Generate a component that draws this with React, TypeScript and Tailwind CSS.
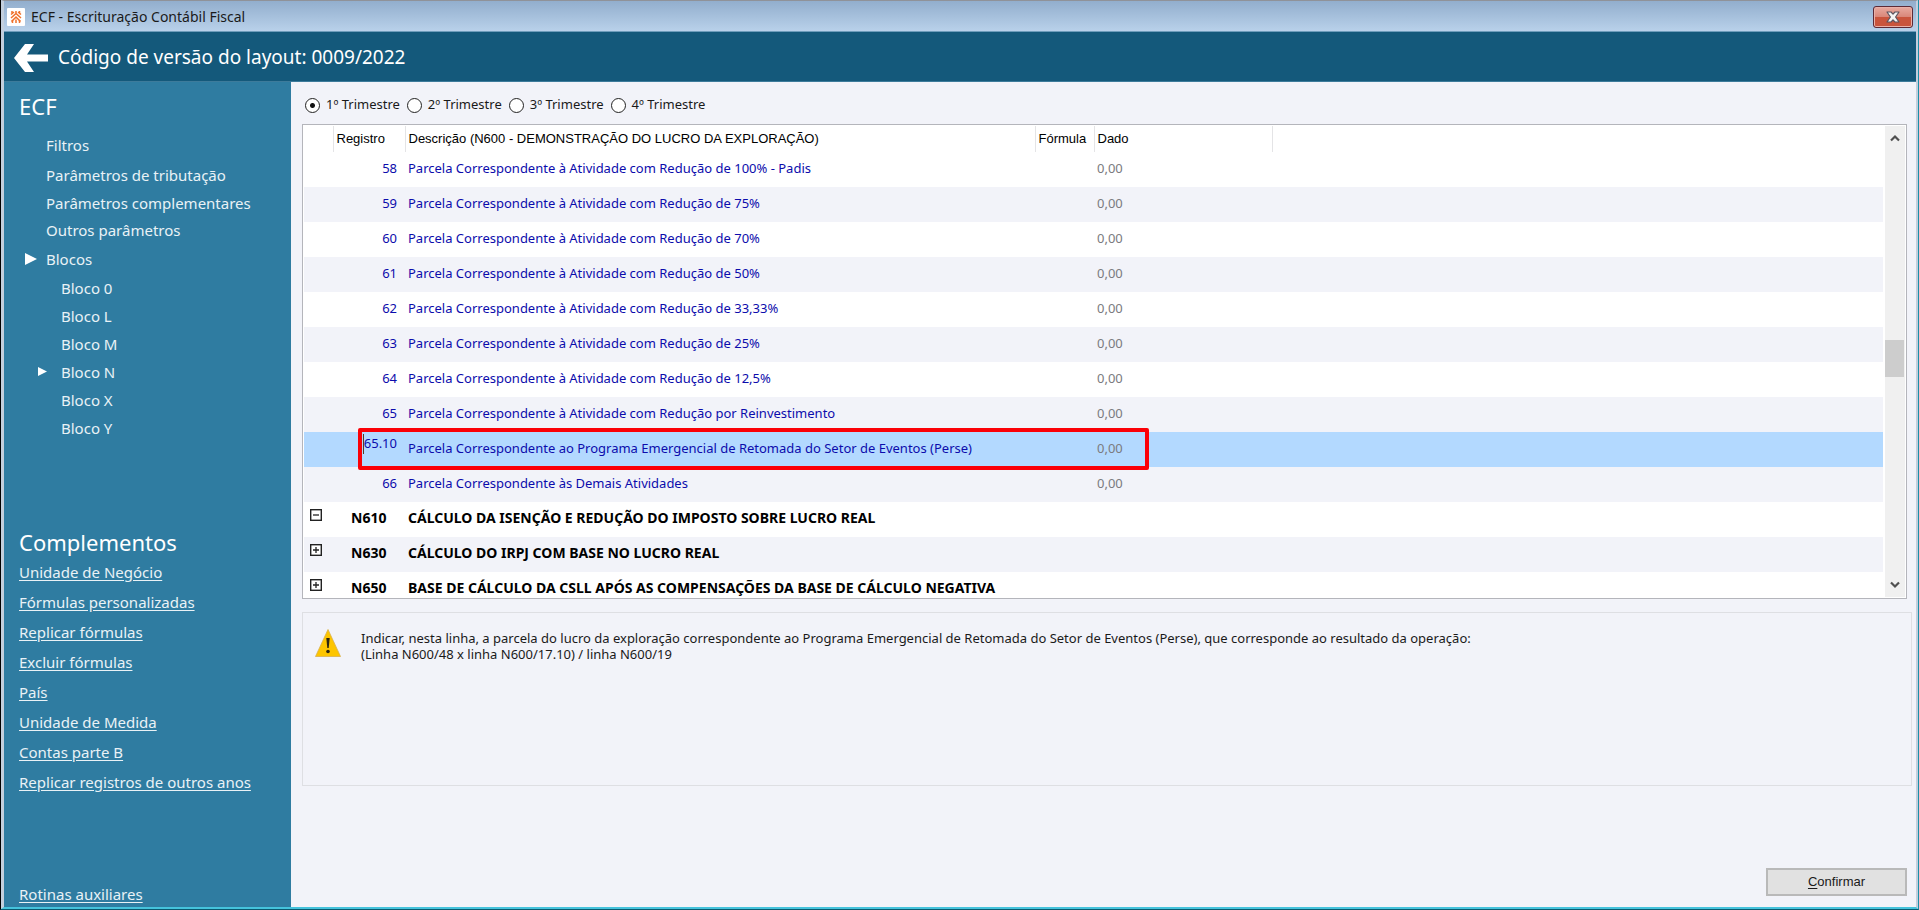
import React, { useState } from "react";

type Line = { code: string; text: string; value?: string; state?: "open" | "closed" };

const prefix = "Parcela Correspondente à Atividade com Redução";

const lines: Line[] = [
  { code: "58", text: `${prefix} de 100% - Padis`, value: "0,00" },
  { code: "59", text: `${prefix} de 75%`, value: "0,00" },
  { code: "60", text: `${prefix} de 70%`, value: "0,00" },
  { code: "61", text: `${prefix} de 50%`, value: "0,00" },
  { code: "62", text: `${prefix} de 33,33%`, value: "0,00" },
  { code: "63", text: `${prefix} de 25%`, value: "0,00" },
  { code: "64", text: `${prefix} de 12,5%`, value: "0,00" },
  { code: "65", text: `${prefix} por Reinvestimento`, value: "0,00" },
  {
    code: "65.10",
    text: "Parcela Correspondente ao Programa Emergencial de Retomada do Setor de Eventos (Perse)",
    value: "0,00",
  },
  { code: "66", text: "Parcela Correspondente às Demais Atividades", value: "0,00" },
  { code: "N610", text: "CÁLCULO DA ISENÇÃO E REDUÇÃO DO IMPOSTO SOBRE LUCRO REAL", state: "open" },
  { code: "N630", text: "CÁLCULO DO IRPJ COM BASE NO LUCRO REAL", state: "closed" },
  {
    code: "N650",
    text: "BASE DE CÁLCULO DA CSLL APÓS AS COMPENSAÇÕES DA BASE DE CÁLCULO NEGATIVA",
    state: "closed",
  },
];

const selected = "65.10";
const blocks = ["Bloco 0", "Bloco L", "Bloco M", "Bloco N", "Bloco X", "Bloco Y"];
const links = [
  "Unidade de Negócio",
  "Fórmulas personalizadas",
  "Replicar fórmulas",
  "Excluir fórmulas",
  "País",
  "Unidade de Medida",
  "Contas parte B",
  "Replicar registros de outros anos",
];

function AppIcon() {
  return (
    <svg viewBox="0 0 18 18" className="size-[18px]" aria-hidden="true">
      <rect width="18" height="18" rx="1" fill="#fff" />
      <g fill="none" stroke="#f0702a" strokeWidth="1.5">
        <path d="M4 6.500 7 4M11 4l3 2.500M4 10l5-4.500 5 4.500M4.500 13.500l4.500-4.500 4.500 4.500" />
        <path d="M5.500 15v-3M9 15v-3.500M12.500 15v-3M12.500 3v2M5 3v2M9 3v2" />
      </g>
    </svg>
  );
}

function CloseIcon() {
  return (
    <svg viewBox="0 0 14 12" className="h-3 w-3.5" aria-hidden="true">
      <path
        d="M1 1h4l2 2.200L9 1h4L9.600 6 13 11H9L7 8.800 5 11H1L4.400 6Z"
        fill="#f4f4f4"
        stroke="#5b5560"
        strokeWidth="1.200"
        strokeLinejoin="round"
      />
    </svg>
  );
}

function Expander({ open }: { open: boolean }) {
  return (
    <svg viewBox="0 0 12 12" className="block size-3" aria-hidden="true">
      <rect x="0.700" y="0.700" width="10.600" height="10.600" fill="#fff" stroke="#222" strokeWidth="1.400" />
      <path d={open ? "M3 6h6" : "M3 6h6M6 3v6"} stroke="#222" strokeWidth="1.300" />
    </svg>
  );
}

function Chevron({ up }: { up?: boolean }) {
  return (
    <svg viewBox="0 0 10 8" className="h-2 w-2.5" aria-hidden="true">
      <path d={up ? "M1 6.500 5 2.500l4 4" : "M1 1.500l4 4 4-4"} fill="none" stroke="#505050" strokeWidth="2.200" />
    </svg>
  );
}

export default function App() {
  const [quarter, setQuarter] = useState(1);

  return (
    <div className="flex h-screen flex-col overflow-hidden border-r border-b border-l border-r-[#1b8fa8] border-b-[#0b5a70] border-l-black bg-[#c3cfdd] font-['Noto_Sans','Open_Sans',sans-serif] text-[#1a1a1a]">
      <div className="flex min-h-0 flex-1 flex-col border-t border-r-2 border-b-2 border-l-[3px] border-x-[#c3cfdd] border-t-[#8f9299] border-b-[#45c3dc]">
        <div className="flex h-[31px] shrink-0 items-center border-b border-[#6e9dbb] bg-linear-to-b from-[#92aecd] to-[#b9d1ea] pt-0.5 pr-[3px] pl-[3px]">
          <AppIcon />
          <h1 className="ml-1.5 text-sm">ECF - Escrituração Contábil Fiscal</h1>
          <button
            type="button"
            aria-label="Fechar"
            className="ml-auto flex h-[22px] w-10 items-center justify-center rounded-[3px] border border-[#5c2a36] bg-linear-to-b from-[#e8aaa0] from-0% via-[#d98678] via-50% to-[#c9543c] to-50% shadow-[inset_0_0_0_1px_#e9b0a8]"
          >
            <CloseIcon />
          </button>
        </div>

        <header className="flex h-[50px] shrink-0 items-center border-b border-[#3d7b9b] bg-[#14597b] pt-0.5 pl-2.5 text-white">
          <button type="button" aria-label="Voltar">
            <svg viewBox="0 0 34 28" className="block h-7 w-[34px]" aria-hidden="true">
              <path d="M0 14 11 0h9l-7 10.500h21v7H13L20 28h-9Z" fill="#fff" />
            </svg>
          </button>
          <h2 className="ml-2.5 text-[19px]">Código de versão do layout: 0009/2022</h2>
        </header>

        <div className="flex min-h-0 flex-1">
          <nav className="flex w-[287px] shrink-0 flex-col bg-[#2f7ca1] text-[15px] text-[#e9f2f6]">
            <h3 className="flex h-12 shrink-0 items-center pl-[15px] text-[22px] text-white">ECF</h3>
            <ul className="pl-[42px]">
              <li className="flex h-[30px] items-center"><button type="button">Filtros</button></li>
              <li className="flex h-[30px] items-center"><button type="button">Parâmetros de tributação</button></li>
              <li className="flex h-[27px] items-center"><button type="button">Parâmetros complementares</button></li>
              <li className="flex h-[27px] items-center"><button type="button">Outros parâmetros</button></li>
              <li className="-ml-[21px]">
                <div className="flex h-[30px] items-center gap-[9px]">
                  <svg viewBox="0 0 12 12" className="size-3" aria-hidden="true">
                    <path d="M0 0 12 6 0 12Z" fill="#fff" />
                  </svg>
                  <button type="button">Blocos</button>
                </div>
                <ul className="pl-[13px]">
                  {blocks.map((b) => (
                    <li key={b} className="flex h-7 items-center">
                      <span className="w-[23px]">
                        {b === "Bloco N" && (
                          <svg viewBox="0 0 9 9" className="mb-0.5 size-[9px]" aria-hidden="true">
                            <path d="M0 0 9 4.500 0 9Z" fill="#fff" />
                          </svg>
                        )}
                      </span>
                      <button type="button">{b}</button>
                    </li>
                  ))}
                </ul>
              </li>
            </ul>
            <h3 className="mt-[85px] flex h-[30px] items-center pl-[15px] text-[22px] text-white">Complementos</h3>
            <ul className="pl-[15px]">
              {links.map((l) => (
                <li key={l} className="flex h-[30px] items-center">
                  <a href="#" className="underline underline-offset-2">{l}</a>
                </li>
              ))}
            </ul>
            <div className="mt-auto flex h-[26px] items-center pl-[15px]">
              <a href="#" className="underline underline-offset-2">Rotinas auxiliares</a>
            </div>
          </nav>

          <main className="flex min-w-0 flex-1 flex-col bg-[#f2f3f9] pr-1 pl-[11px] text-[13px]">
            <fieldset className="shrink-0">
              <div className="flex h-[42px] items-center gap-[7px] pt-1 pl-[3px]">
                {[1, 2, 3, 4].map((q) => (
                  <label key={q} className="flex items-center gap-1.5">
                    <input
                      type="radio"
                      name="trimestre"
                      checked={quarter === q}
                      onChange={() => setQuarter(q)}
                      className="size-[15px] appearance-none rounded-full border border-[#222] bg-white checked:bg-[radial-gradient(circle,#111_0_2px,#fff_3px)]"
                    />
                    {q}º Trimestre
                  </label>
                ))}
              </div>
            </fieldset>

            <section className="mr-[5px] flex min-h-0 flex-1 gap-0.5 border border-[#b4b5bb] bg-white p-px">
              <div className="min-w-0 flex-1 overflow-hidden">
                <table className="w-full table-fixed border-collapse text-left">
                  <colgroup>
                    <col className="w-[29px]" />
                    <col className="w-[72px]" />
                    <col className="w-[630px]" />
                    <col className="w-[59px]" />
                    <col className="w-[178px]" />
                    <col />
                  </colgroup>
                  <thead>
                    <tr className="h-[26px] font-['Liberation_Sans',Arial,sans-serif] text-black [&>th]:border-r [&>th]:border-[#e4e4e6] [&>th]:p-0 [&>th]:pl-[3px] [&>th]:font-normal">
                      <th></th>
                      <th scope="col">Registro</th>
                      <th scope="col">Descrição (N600 - DEMONSTRAÇÃO DO LUCRO DA EXPLORAÇÃO)</th>
                      <th scope="col">Fórmula</th>
                      <th scope="col">Dado</th>
                      <td></td>
                    </tr>
                  </thead>
                  <tbody>
                    {lines.map((l, i) => {
                      const active = l.code === selected;
                      const band = active ? "bg-[#b3d9ff]" : i % 2 ? "bg-[#f2f3f9]" : "bg-white";
                      const tone = l.state ? "text-sm font-bold text-black" : "text-[#0c0cac]";
                      return (
                        <tr key={l.code} className={`h-[35px] ${band} ${tone} [&>td]:p-0`}>
                          <td className="align-top">
                            {l.state && (
                              <button
                                type="button"
                                aria-label={l.state === "open" ? `Recolher ${l.code}` : `Expandir ${l.code}`}
                                className="mt-[7px] ml-1.5 block"
                              >
                                <Expander open={l.state === "open"} />
                              </button>
                            )}
                          </td>
                          <td className={active ? "relative align-top" : ""}>
                            {l.state ? (
                              <div className="pb-1 pl-[18px]">{l.code}</div>
                            ) : active ? (
                              <div className="flex justify-end pt-0.5 pr-2">
                                <span className="border-l border-[#5a3a20]">{l.code}</span>
                              </div>
                            ) : (
                              <div className="pr-2 pb-0.5 text-right">{l.code}</div>
                            )}
                            {active && (
                              <div className="pointer-events-none absolute -top-1 left-[25px] z-10 h-[42px] w-[791px] rounded-[2px] border-4 border-[#fb0007]" />
                            )}
                          </td>
                          <td className="whitespace-nowrap">
                            <div className={l.state ? "pb-1 pl-[3px]" : "pb-0.5 pl-[3px]"}>{l.text}</div>
                          </td>
                          <td></td>
                          <td><div className="pb-0.5 pl-[3px] text-[#7b7b80]">{l.value}</div></td>
                          <td></td>
                        </tr>
                      );
                    })}
                  </tbody>
                </table>
              </div>
              <div className="flex w-5 shrink-0 flex-col items-center bg-[#f0f0f0]">
                <button type="button" aria-label="Rolar para cima" className="flex h-6 w-full items-center justify-center">
                  <Chevron up />
                </button>
                <div className="flex w-full flex-1 flex-col">
                  <div className="flex-[190]" />
                  <div className="h-[37px] w-[19px] bg-[#cdcdcd]" />
                  <div className="flex-[196]" />
                </div>
                <button type="button" aria-label="Rolar para baixo" className="flex h-6 w-full items-center justify-center">
                  <Chevron />
                </button>
              </div>
            </section>

            <section className="mt-[13px] flex h-[174px] shrink-0 items-start gap-5 border border-[#dedfe3] pt-4 pl-3">
              <svg viewBox="0 0 26 28" className="h-7 w-[26px]" aria-hidden="true">
                <path d="M13 0.500 25.500 27.500H0.500Z" fill="#fdc500" stroke="#d9b04a" strokeWidth="0.800" strokeLinejoin="round" />
                <path d="M11.300 9h3.400l-1 10h-1.400Z" fill="#2b2410" />
                <circle cx="13" cy="22.500" r="1.800" fill="#2b2410" />
              </svg>
              <p className="pt-px leading-4">
                Indicar, nesta linha, a parcela do lucro da exploração correspondente ao Programa Emergencial de Retomada do
                Setor de Eventos (Perse), que corresponde ao resultado da operação:
                <br />
                (Linha N600/48 x linha N600/17.10) / linha N600/19
              </p>
            </section>

            <footer className="flex h-[121px] shrink-0 items-end justify-end pr-[5px] pb-[11px]">
              <button
                type="button"
                className="h-7 w-[141px] border-2 border-[#b9b9b9] bg-[#e1e1e1] font-['Liberation_Sans',Arial,sans-serif]"
              >
                <span className="underline underline-offset-2">C</span>onfirmar
              </button>
            </footer>
          </main>
        </div>
      </div>
    </div>
  );
}
